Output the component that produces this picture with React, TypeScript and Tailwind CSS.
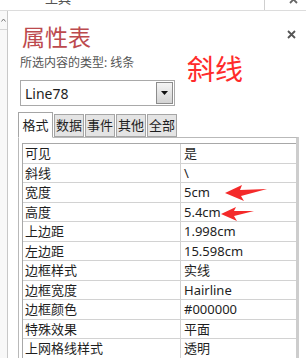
import React from "react";

const rows: [string, string][] = [
  ["可见", "是"],
  ["斜线", "\\"],
  ["宽度", "5cm"],
  ["高度", "5.4cm"],
  ["上边距", "1.998cm"],
  ["左边距", "15.598cm"],
  ["边框样式", "实线"],
  ["边框宽度", "Hairline"],
  ["边框颜色", "#000000"],
  ["特殊效果", "平面"],
  ["上网格线样式", "透明"],
];

const tabs = ["数据", "事件", "其他", "全部"];

export default function App() {
  return (
    <div className="relative w-[306px] h-[358px] overflow-hidden bg-white text-[#1e1e1e] font-['Noto_Sans','Noto_Sans_CJK_SC',sans-serif]">
      {/* window strip on top */}
      <div className="flex h-[11px] shrink-0 border-b border-[#dcdcdc] overflow-hidden">
        <span className="ml-[45px] -mt-[10px] text-[13px] leading-[16px] text-[#555]">工具</span>
        <div className="flex-1" />
        <div className="w-px h-full bg-[#cfcfcf]" />
        <div className="w-[41px] pl-[24px] -mt-[5px]">
          <svg width="9" height="9" viewBox="0 0 9 9">
            <path d="M1 1L8 8M8 1L1 8" stroke="#666" strokeWidth="1.8" />
          </svg>
        </div>
      </div>

      <div className="flex h-[347px]">
        {/* left edge */}
        <div className="w-[8px] shrink-0 border-r border-[#c8c8c8] bg-[#f8f8f8]">
          <div className="h-[19px] border-b border-[#d6d6d6] flex items-center justify-center">
            <svg width="5" height="4" viewBox="0 0 5 4">
              <path d="M0.5 3.5L2.5 1L4.5 3.5" stroke="#777" fill="none" />
            </svg>
          </div>
        </div>

        {/* property sheet */}
        <div className="flex-1">
          <div className="flex items-start justify-between pl-[14px] pr-[10px] pt-[13px]">
            <span className="text-[23px] leading-[27px] text-[#bc4a4e]">属性表</span>
            <svg className="mt-[6px]" width="9" height="9" viewBox="0 0 9 9">
              <path d="M1 1L8 8M8 1L1 8" stroke="#555" strokeWidth="1.8" />
            </svg>
          </div>
          <div className="pl-[12px] mt-[4px] text-[12px] leading-[16px] text-[#555]">所选内容的类型: 线条</div>

          <div className="ml-[12px] mt-[9px] w-[155px] h-[26px] border border-[#a9a9a9] flex items-center justify-between">
            <span className="pl-[4px] text-[14px]">Line78</span>
            <div className="mr-[1px] w-[17px] h-[22px] border border-[#8c8c8c] bg-gradient-to-b from-[#f4f4f4] to-[#d4d4d4] flex items-center justify-center">
              <svg width="7" height="4" viewBox="0 0 7 4">
                <path d="M0 0H7L3.5 4Z" fill="#111" />
              </svg>
            </div>
          </div>

          <div className="ml-[10px] mt-[5px] flex items-end h-[26px]">
            <div className="relative h-[26px] w-[35px] -mb-px border border-[#a5a5a5] border-b-white bg-white text-[13px] leading-[24px] text-center">格式</div>
            {tabs.map((t) => (
              <div key={t} className="h-[23px] w-[30px] ml-px border border-[#a5a5a5] bg-[#e4e4e4] text-[13px] leading-[21px] text-center">
                {t}
              </div>
            ))}
          </div>

          <div className="ml-[10px] w-[281px] h-[240px] border-l border-t border-r-[3px] border-[#b9b9b9] border-r-[#cdcdcd] pl-[3px] pt-[5px]">
            <div className="w-[274px] border-l border-t border-[#a8a8a8]">
              {rows.map(([k, v], i) => (
                <div
                  key={k}
                  className={
                    i % 2 === 0
                      ? "flex h-[20px] border-b border-[#d2d2d2] text-[13px] leading-[19px]"
                      : "flex h-[19px] border-b border-[#d2d2d2] text-[13px] leading-[18px]"
                  }
                >
                  <div className="w-[158px] shrink-0 pl-[2px] border-r border-[#d2d2d2]">{k}</div>
                  <div className="flex-1 pl-[3px]">{v}</div>
                </div>
              ))}
            </div>
          </div>
        </div>
      </div>

      {/* red annotations */}
      <div className="absolute left-[187px] top-[52px] text-[28px] leading-[34px] text-[#ff2b2b]">斜线</div>
      <svg className="absolute left-0 top-0" width="306" height="358">
        <polygon points="225,193 242,185 240,190 267,189 241,196 244,201" fill="#f42a2a" />
        <polygon points="221,214 236,207 234,211 254,211 234,216 237,221" fill="#f42a2a" />
      </svg>
    </div>
  );
}
